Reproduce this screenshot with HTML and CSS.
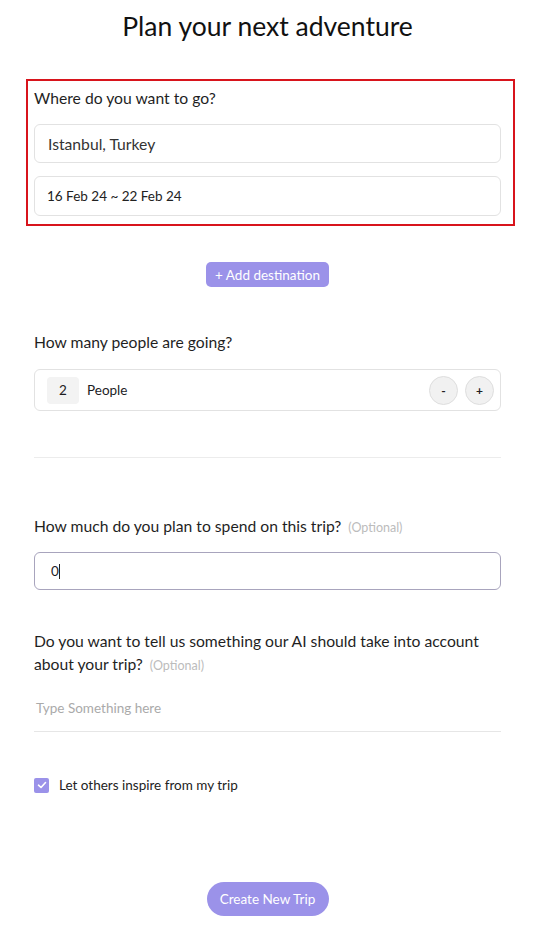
FILE: index.html
```html
<!DOCTYPE html>
<html lang="en">
<head>
  <meta charset="UTF-8" />
  <meta name="viewport" content="width=device-width, initial-scale=1.0"/>
  <title>Plan your next adventure</title>
  <link rel="stylesheet" href="styles.css">
</head>
<body>
  <main class="page">
    <h1 class="title">Plan your next adventure</h1>

    <section class="destination">
      <label class="label">Where do you want to go?</label>
      <div class="field field-city">Istanbul, Turkey</div>
      <div class="field field-dates">16 Feb 24 ~ 22 Feb 24</div>
    </section>

    <div class="add-row">
      <button class="btn-add">+ Add destination</button>
    </div>

    <section class="people">
      <label class="label">How many people are going?</label>
      <div class="people-box">
        <span class="count">2</span>
        <span class="people-text">People</span>
        <div class="steppers">
          <button class="step">-</button>
          <button class="step">+</button>
        </div>
      </div>
    </section>

    <hr class="divider">

    <section class="budget">
      <label class="label">How much do you plan to spend on this trip? <span class="optional">(Optional)</span></label>
      <div class="budget-input">0<span class="caret"></span></div>
    </section>

    <section class="notes">
      <label class="label">
        <span>Do you want to tell us something our AI should take into account</span><br>
        <span>about your trip?</span> <span class="optional">(Optional)</span>
      </label>
      <div class="notes-input">Type Something here</div>
    </section>

    <div class="inspire">
      <span class="checkbox">
        <svg width="10" height="10" viewBox="0 0 10 10"><path d="M1.5 5.2 L4 7.5 L8.5 2.5" fill="none" stroke="#fff" stroke-width="1.6" stroke-linecap="round" stroke-linejoin="round"/></svg>
      </span>
      <span class="inspire-text">Let others inspire from my trip</span>
    </div>

    <div class="create-row">
      <button class="btn-create">Create New Trip</button>
    </div>
  </main>
</body>
</html>
```

FILE: styles.css
```css
* {
  box-sizing: border-box;
  margin: 0;
  font-family: 'Lato', 'Noto Sans', sans-serif;
}
body {
  background: #fff;
  color: #1d1d1f;
}
.page {
  width: 550px;
  padding: 0 49px 0 34px;
}
.title {
  font-size: 26.5px;
  font-weight: 400;
  text-align: center;
  padding-top: 10px;
  line-height: 32px;
  color: #111;
}
.label {
  display: block;
  font-size: 15.7px;
  line-height: 23px;
  color: #1f1f1f;
}
.optional {
  font-size: 12.5px;
  line-height: 1;
  color: #bcbcbc;
  margin-left: 3px;
}
.destination {
  margin: 37px -14px 0 -8px;
  border: 2px solid #d8141c;
  padding: 6px 12px 8px 6px;
}
.field {
  border: 1px solid #e2e2e2;
  border-radius: 6px;
  padding: 0 13px;
  display: flex;
  align-items: center;
}
.field-city {
  margin-top: 14px;
  height: 39px;
  font-size: 15.7px;
  color: #333;
}
.field-dates {
  margin-top: 13px;
  height: 40px;
  font-size: 13.5px;
  color: #222;
  padding-left: 12px;
}
.add-row {
  display: flex;
  justify-content: center;
  margin-top: 36px;
}
.btn-add {
  background: #9b92e9;
  color: #fff;
  border: none;
  border-radius: 5px;
  font-size: 13.5px;
  height: 25px;
  width: 123px;
  padding: 0;
}
.people {
  margin-top: 44px;
}
.people-box {
  margin-top: 15px;
  border: 1px solid #e2e2e2;
  border-radius: 6px;
  height: 42px;
  display: flex;
  align-items: center;
  padding: 0 6px 0 12px;
}
.count {
  width: 32px;
  height: 27px;
  background: #f3f3f3;
  border-radius: 4px;
  display: flex;
  align-items: center;
  justify-content: center;
  font-size: 13.5px;
}
.people-text {
  margin-left: 8px;
  font-size: 13.5px;
  flex: 1;
}
.steppers {
  display: flex;
  gap: 7px;
}
.step {
  width: 29px;
  height: 29px;
  border-radius: 50%;
  border: 1px solid #dedede;
  background: #f1f1f1;
  font-size: 12px;
  font-weight: 700;
  color: #222;
  padding: 0;
}
.divider {
  border: none;
  border-top: 1px solid #ececec;
  margin-top: 46px;
}
.budget {
  margin-top: 57px;
}
.budget-input {
  margin-top: 14px;
  height: 38px;
  border: 1px solid #a8a4bd;
  border-radius: 6px;
  display: flex;
  align-items: center;
  padding-left: 16px;
  font-size: 13.5px;
}
.caret {
  width: 1px;
  height: 15px;
  background: #222;
}
.notes {
  margin-top: 40px;
}
.notes-input {
  margin-top: 24px;
  font-size: 13.5px;
  color: #aaa;
  padding: 0 2px 15px;
  border-bottom: 1px solid #e6e6e6;
}
.inspire {
  margin-top: 45px;
  display: flex;
  align-items: center;
  gap: 10px;
}
.checkbox {
  width: 15px;
  height: 15px;
  border-radius: 2px;
  background: #9b92e9;
  display: flex;
  align-items: center;
  justify-content: center;
}
.inspire-text {
  font-size: 13.5px;
  color: #222;
}
.create-row {
  display: flex;
  justify-content: center;
  margin-top: 89px;
}
.btn-create {
  background: #9b92e9;
  color: #fff;
  border: none;
  border-radius: 18px;
  font-size: 13.5px;
  height: 34px;
  width: 122px;
  padding: 0;
}
```
